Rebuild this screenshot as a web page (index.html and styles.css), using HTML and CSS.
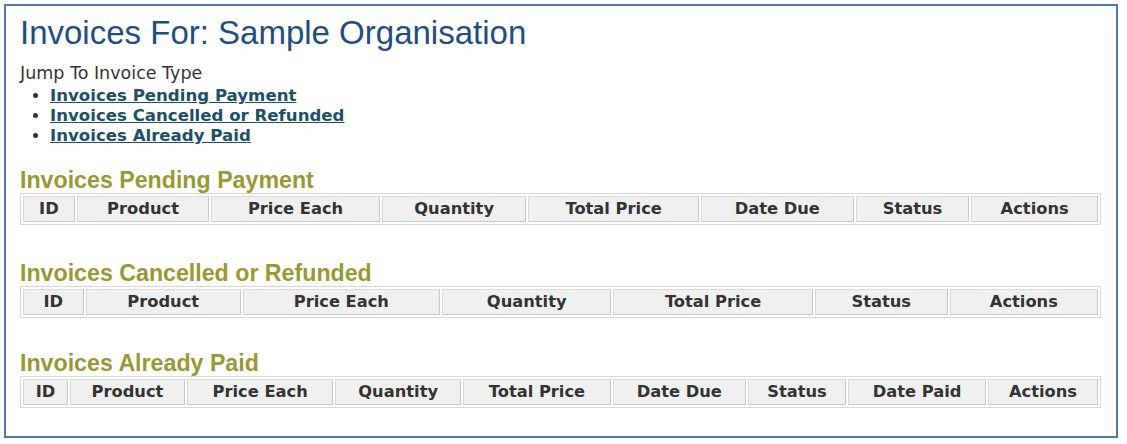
FILE: index.html
```html
<!DOCTYPE html>
<html>
<head>
<meta charset="utf-8">
<title>Invoices For: Sample Organisation</title>
<link rel="stylesheet" href="styles.css">
</head>
<body>
<div class="panel">
  <h1 class="page-title">Invoices For: Sample Organisation</h1>
  <div class="jump">
    <div class="jump-label">Jump To Invoice Type</div>
    <ul class="jump-list">
      <li><a href="#pending">Invoices Pending Payment</a></li>
      <li><a href="#cancelled">Invoices Cancelled or Refunded</a></li>
      <li><a href="#paid">Invoices Already Paid</a></li>
    </ul>
  </div>

  <section class="invoice-section first" id="pending">
    <h2 class="section-title">Invoices Pending Payment</h2>
    <table class="invoice-table">
      <thead>
        <tr>
          <th>ID</th><th>Product</th><th>Price Each</th><th>Quantity</th><th>Total Price</th><th>Date Due</th><th>Status</th><th>Actions</th>
        </tr>
      </thead>
    </table>
  </section>

  <section class="invoice-section" id="cancelled">
    <h2 class="section-title">Invoices Cancelled or Refunded</h2>
    <table class="invoice-table">
      <thead>
        <tr>
          <th>ID</th><th>Product</th><th>Price Each</th><th>Quantity</th><th>Total Price</th><th>Status</th><th>Actions</th>
        </tr>
      </thead>
    </table>
  </section>

  <section class="invoice-section" id="paid">
    <h2 class="section-title">Invoices Already Paid</h2>
    <table class="invoice-table">
      <thead>
        <tr>
          <th>ID</th><th>Product</th><th>Price Each</th><th>Quantity</th><th>Total Price</th><th>Date Due</th><th>Status</th><th>Date Paid</th><th>Actions</th>
        </tr>
      </thead>
    </table>
  </section>
</div>
</body>
</html>
```

FILE: styles.css
```css
html, body {
  margin: 0;
  padding: 0;
  background: #ffffff;
}

body {
  font-family: "DejaVu Sans", Verdana, sans-serif;
  color: #333333;
}

.panel {
  margin: 4px 9px 7px 4px;
  border: 2px solid #4a7ab0;
  padding: 8px 15px 28px 14px;
}

.page-title {
  margin: 0;
  font-family: "Liberation Sans", Arial, sans-serif;
  font-weight: normal;
  font-size: 33px;
  line-height: 38px;
  color: #1f4e7f;
}

.jump {
  margin-top: 10px;
}

.jump-label {
  font-size: 17.5px;
  line-height: 22px;
  color: #333333;
  margin-bottom: 2px;
}

.jump-list {
  margin: 0;
  padding-left: 30px;
  list-style: disc;
  font-size: 16.6px;
  line-height: 20px;
}

.jump-list a {
  font-weight: bold;
  color: #1d4f66;
  text-decoration: underline;
}

.invoice-section {
  margin-top: 22px;
}

.invoice-section.first {
  padding-bottom: 4px;
}

.invoice-section + .invoice-section {
  margin-top: 32px;
}

.invoice-section + .invoice-section + .invoice-section {
  margin-top: 33px;
}

.section-title {
  margin: 0;
  font-family: "Liberation Sans", Arial, sans-serif;
  font-weight: bold;
  font-size: 23.2px;
  line-height: 25px;
  color: #999933;
}

.invoice-table {
  width: 100%;
  border: 1px solid #d8d8d8;
  border-spacing: 2px;
  margin-top: 0;
}

.invoice-table th {
  background: #f0f0f0;
  border: 1px solid #c8c8c8;
  border-top-color: #dadada;
  border-left-color: #dadada;
  padding: 2px 6px;
  font-size: 16.3px;
  line-height: 20px;
  font-weight: bold;
  color: #333333;
  text-align: center;
}
```
